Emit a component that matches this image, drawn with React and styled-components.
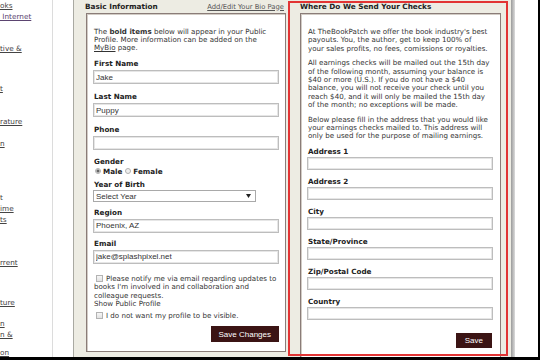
import { Fragment } from "react";
import styled, { createGlobalStyle } from "styled-components";

const GlobalStyle = createGlobalStyle`
  html, body {
    margin: 0;
    padding: 0;
    background: #fff;
  }
  body {
    font-family: "DejaVu Sans", Verdana, sans-serif;
    color: #333;
  }
  * {
    box-sizing: border-box;
  }
`;

const Frame = styled.div`
  width: 540px;
  height: 360px;
  display: flex;
  overflow: hidden;
  border-right: 2px solid #000;
  border-bottom: 3px solid #000;
  background: #fff;
`;

const Sidebar = styled.nav`
  width: 53px;
  flex-shrink: 0;
  overflow: hidden;
  border-right: 1px solid #dcdcdc;
  display: flex;
  flex-direction: column;
  font-size: 7.3px;
  line-height: 11px;
  white-space: nowrap;
`;

const SideLink = styled.a`
  display: block;
  margin-top: ${({ $gap }) => $gap || 0}px;
  color: ${({ $visited }) => ($visited ? "#5b4470" : "#444")};
  text-decoration: ${({ $plain }) => ($plain ? "none" : "underline")};
`;

const Gutter = styled.div`
  width: 21px;
  flex-shrink: 0;
  border-right: 1px solid #a9a9a2;
`;

const Content = styled.main`
  position: relative;
  width: 437px;
  flex-shrink: 0;
  background: #edece3;
  display: flex;
  gap: 14px;
  padding: 0 10px 0 12px;
`;

const Column = styled.section`
  width: ${({ $width }) => $width}px;
  flex-shrink: 0;
  display: flex;
  flex-direction: column;
  padding-bottom: ${({ $open }) => ($open ? 0 : 5)}px;
`;

const PanelHead = styled.header`
  height: 13px;
  display: flex;
  align-items: center;
  justify-content: space-between;
  white-space: nowrap;
`;

const Title = styled.h2`
  margin: 0 0 0 ${({ $shift }) => $shift || 0}px;
  font-size: 7.3px;
  font-weight: bold;
  color: #222;
`;

const HeadLink = styled.a`
  font-size: 6.8px;
  color: #555;
  text-decoration: underline;
  margin-right: 2px;
`;

const Box = styled.div`
  flex: 1;
  background: #fff;
  border: 1px solid #8a7c78;
  border-bottom: ${({ $open }) => ($open ? "none" : "1px solid #8a7c78")};
  box-shadow: inset 1px 1px 0 #d2ccc5;
  padding: 14px ${({ $pad }) => $pad}px 0 6px;
  margin-bottom: ${({ $open }) => ($open ? -4 : 0)}px;
  display: flex;
  flex-direction: column;
`;

const Text = styled.p`
  margin: 0 0 ${({ $after }) => $after || 0}px;
  padding-left: 1px;
  font-size: 7.1px;
  line-height: ${({ $lh }) => $lh || 8}px;
  white-space: nowrap;

  b {
    font-weight: bold;
  }

  a {
    color: #333;
    text-decoration: underline;
  }
`;

const Label = styled.label`
  display: block;
  margin: ${({ $gap }) => $gap}px 0 ${({ $below }) => $below}px;
  padding-left: 1px;
  font-size: 7.2px;
  line-height: 8px;
  font-weight: bold;
  color: #222;
`;

const Input = styled.input`
  display: block;
  width: 100%;
  height: ${({ $h }) => $h}px;
  margin: 0;
  padding: 0 2px;
  border: 1px solid #bdbdbd;
  box-shadow: inset 0 0 0 1px #e6e6e6;
  background: #fff;
  font-family: "Liberation Sans", Arial, sans-serif;
  font-size: 8px;
  color: #333;
  outline: none;
`;

const SelectBox = styled.div`
  width: 163px;
  height: 12px;
  border: 1px solid #a9a9a9;
  background: #fff;
  display: flex;
  align-items: center;
  justify-content: space-between;
  padding: 0 4px 0 2px;
  font-family: "Liberation Sans", Arial, sans-serif;
  font-size: 8px;
  color: #333;
`;

const RadioRow = styled.div`
  height: 10px;
  display: flex;
  align-items: center;
  padding-left: 2px;
  font-size: 7.2px;
  font-weight: bold;
  color: #222;

  label {
    display: flex;
    align-items: center;
    margin-right: 3px;
  }
`;

const Radio = styled.input.attrs({ type: "radio" })`
  appearance: none;
  width: 6px;
  height: 6px;
  margin: 0 2px 0 0;
  border: 1px solid #b0b0b0;
  border-radius: 50%;
  background: #f0f0f0;

  &:checked {
    background: radial-gradient(circle, #666 0 1.3px, #ececec 1.8px);
  }
`;

const Check = styled.input.attrs({ type: "checkbox" })`
  appearance: none;
  width: 7px;
  height: 7px;
  margin: 0 3px 0 2px;
  vertical-align: -1px;
  border: 1px solid #b3b3b3;
  background: linear-gradient(#f6f6f6, #e2e2e2);
`;

const ButtonRow = styled.div`
  display: flex;
  justify-content: flex-end;
  margin-top: ${({ $gap }) => $gap}px;
  padding-right: ${({ $inset }) => $inset || 0}px;
`;

const Button = styled.button`
  height: ${({ $h }) => $h}px;
  padding: 0 ${({ $px }) => $px}px;
  border: none;
  background: #3b1414;
  color: #fff;
  font-family: "Liberation Sans", Arial, sans-serif;
  font-size: 8px;
`;

const Highlight = styled.div`
  position: absolute;
  left: 214px;
  top: 1px;
  width: 220px;
  height: 355px;
  border: 2px solid #e23434;
  pointer-events: none;
`;

const Shadow = styled.div`
  width: 4px;
  flex-shrink: 0;
  background: linear-gradient(to right, #9a9a9a, #dcdcdc);
`;

const sideLinks = [
  { t: "oks" },
  { t: "\u00a0Internet", visited: true },
  { t: "tive &", gap: 21 },
  { t: "t", gap: 29 },
  { t: "rature", gap: 22 },
  { t: "n", gap: 11 },
  { t: "t", gap: 43, plain: true },
  { t: "ime" },
  { t: "ts" },
  { t: "rrent", gap: 32 },
  { t: "ture", gap: 29 },
  { t: "n", gap: 10 },
  { t: "n &" },
  { t: "on", gap: 7 },
];

const basicFields = [
  { label: "First Name", value: "Jake", gap: 8 },
  { label: "Last Name", value: "Puppy", gap: 9 },
  { label: "Phone", value: "", gap: 9 },
];

const addressFields = [
  { label: "Address 1", gap: 7 },
  { label: "Address 2", gap: 7.5 },
  { label: "City", gap: 7.5 },
  { label: "State/Province", gap: 7.5 },
  { label: "Zip/Postal Code", gap: 7.5 },
  { label: "Country", gap: 7.5 },
];

const checkCopy = [
  [
    "At TheBookPatch we offer the book industry's best",
    "payouts. You, the author, get to keep 100% of",
    "your sales profits, no fees, comissions or royalties.",
  ],
  [
    "All earnings checks will be mailed out the 15th day",
    "of the following month, assuming your balance is",
    "$40 or more (U.S.). If you do not have a $40",
    "balance, you will not receive your check until you",
    "reach $40, and it will only be mailed the 15th day",
    "of the month; no exceptions will be made.",
  ],
  [
    "Below please fill in the address that you would like",
    "your earnings checks mailed to. This address will",
    "only be used for the purpose of mailing earnings.",
  ],
];

function Lines({ lines }) {
  return lines.map((line, i) => (
    <Fragment key={i}>
      {i > 0 && <br />}
      {line}
    </Fragment>
  ));
}

function BasicInformation() {
  return (
    <Column $width={200}>
      <PanelHead>
        <Title $shift={-1}>Basic Information</Title>
        <HeadLink href="#">Add/Edit Your Bio Page</HeadLink>
      </PanelHead>
      <Box $pad={6}>
        <Text>
          The <b>bold items</b> below will appear in your Public
          <br />
          Profile. More information can be added on the
          <br />
          <a href="#">MyBio</a> page.
        </Text>
        {basicFields.map((f) => (
          <div key={f.label}>
            <Label $gap={f.gap} $below={2}>
              {f.label}
            </Label>
            <Input $h={14} defaultValue={f.value} />
          </div>
        ))}
        <Label $gap={8} $below={0}>
          Gender
        </Label>
        <RadioRow>
          <label>
            <Radio name="gender" defaultChecked /> Male
          </label>
          <label>
            <Radio name="gender" /> Female
          </label>
        </RadioRow>
        <Label $gap={4.5} $below={1.5}>
          Year of Birth
        </Label>
        <SelectBox>
          <span>Select Year</span>
          <svg width="5" height="4" viewBox="0 0 5 4">
            <path d="M0 0h5L2.5 4z" fill="#222" />
          </svg>
        </SelectBox>
        <Label $gap={7} $below={1.5}>
          Region
        </Label>
        <Input $h={14} defaultValue="Phoenix, AZ" />
        <Label $gap={7} $below={2}>
          Email
        </Label>
        <Input $h={14} defaultValue="jake@splashpixel.net" />
        <Text $lh={8.6} style={{ marginTop: 11 }}>
          <Check />
          <Lines
            lines={[
              "Please notify me via email regarding updates to",
              "books I'm involved in and collaboration and",
              "colleague requests.",
              "Show Public Profile",
            ]}
          />
        </Text>
        <Text $lh={8.6} style={{ marginTop: 3 }}>
          <Check />I do not want my profile to be visible.
        </Text>
        <ButtonRow $gap={6}>
          <Button $h={16} $px={8}>
            Save Changes
          </Button>
        </ButtonRow>
      </Box>
    </Column>
  );
}

function CheckAddress() {
  return (
    <Column $width={201} $open>
      <PanelHead>
        <Title>Where Do We Send Your Checks</Title>
      </PanelHead>
      <Box $pad={7} $open>
        {checkCopy.map((lines, i) => (
          <Text key={i} $lh={8.3} $after={i < 2 ? 6.5 : 0}>
            <Lines lines={lines} />
          </Text>
        ))}
        {addressFields.map((f) => (
          <div key={f.label}>
            <Label $gap={f.gap} $below={1}>
              {f.label}
            </Label>
            <Input $h={13.5} />
          </div>
        ))}
        <ButtonRow $gap={13} $inset={1}>
          <Button $h={15.4} $px={9}>
            Save
          </Button>
        </ButtonRow>
      </Box>
    </Column>
  );
}

export default function App() {
  return (
    <>
      <GlobalStyle />
      <Frame>
        <Sidebar>
          {sideLinks.map((l, i) => (
            <SideLink
              key={i}
              href="#"
              $gap={l.gap}
              $plain={l.plain}
              $visited={l.visited}
            >
              {l.t}
            </SideLink>
          ))}
        </Sidebar>
        <Gutter />
        <Content>
          <BasicInformation />
          <CheckAddress />
          <Highlight />
        </Content>
        <Shadow />
      </Frame>
    </>
  );
}
